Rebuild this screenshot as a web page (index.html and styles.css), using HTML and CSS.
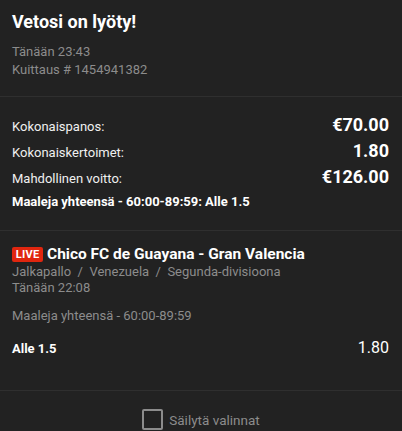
FILE: index.html
```html
<!DOCTYPE html>
<html lang="fi">
<head>
<meta charset="utf-8">
<link rel="stylesheet" href="styles.css">
</head>
<body>
<div class="receipt">
  <section class="header">
    <h1 class="title">Vetosi on lyöty!</h1>
    <div class="meta">
      <div>Tänään 23:43</div>
      <div>Kuittaus # 1454941382</div>
    </div>
  </section>
  <section class="totals">
    <div class="row"><span class="label">Kokonaispanos:</span><span class="value">€70.00</span></div>
    <div class="row"><span class="label">Kokonaiskertoimet:</span><span class="value">1.80</span></div>
    <div class="row"><span class="label">Mahdollinen voitto:</span><span class="value">€126.00</span></div>
    <div class="market-summary">Maaleja yhteensä - 60:00-89:59: Alle 1.5</div>
  </section>
  <section class="event">
    <div class="event-title"><span class="live">LIVE</span><span>Chico FC de Guayana - Gran Valencia</span></div>
    <div class="event-meta">
      <div>Jalkapallo&nbsp; / &nbsp;Venezuela&nbsp; / &nbsp;Segunda-divisioona</div>
      <div>Tänään 22:08</div>
    </div>
    <div class="event-market">Maaleja yhteensä - 60:00-89:59</div>
    <div class="selection"><span class="sel-name">Alle 1.5</span><span class="sel-odds">1.80</span></div>
  </section>
  <footer class="footer">
    <label class="keep"><span class="checkbox"></span><span>Säilytä valinnat</span></label>
  </footer>
</div>
</body>
</html>
```
FILE: styles.css
```css
* { box-sizing: border-box; }
html, body { margin: 0; padding: 0; }
body {
  background: #222222;
  font-family: Roboto, "Liberation Sans", sans-serif;
  color: #ffffff;
  width: 402px;
  height: 431px;
  overflow: hidden;
}
.receipt { width: 402px; }
.header {
  padding: 10px 12px 17px;
  border-bottom: 1px solid #2f2f2f;
}
.title {
  margin: 0;
  font-size: 18px;
  line-height: 24px;
  font-weight: 700;
  color: #ffffff;
}
.meta {
  margin-top: 9px;
  font-size: 13px;
  line-height: 18px;
  color: #8c8c8c;
}
.totals {
  padding: 15px 13px 18px 12px;
  border-bottom: 1px solid #2f2f2f;
}
.row {
  display: flex;
  justify-content: space-between;
  align-items: baseline;
  height: 26px;
  line-height: 26px;
}
.label { font-size: 13px; color: #f0f0f0; }
.value { font-size: 18px; font-weight: 700; color: #ffffff; }
.market-summary {
  margin-top: 2px;
  font-size: 13px;
  line-height: 20px;
  font-weight: 700;
  color: #ffffff;
}
.event {
  padding: 13px 13px 31px 12px;
  border-bottom: 1px solid #2f2f2f;
}
.event-title {
  display: flex;
  align-items: center;
  gap: 4px;
  font-size: 15.5px;
  line-height: 20px;
  font-weight: 700;
}
.live {
  display: inline-flex;
  align-items: center;
  justify-content: center;
  width: 31px;
  height: 15px;
  border-radius: 2px;
  background: #e0260f;
  font-size: 11px;
  font-weight: 700;
  letter-spacing: 0.3px;
  line-height: 15px;
}
.event-meta {
  font-size: 13px;
  line-height: 16px;
  color: #8c8c8c;
}
.event-market {
  margin-top: 12px;
  font-size: 13px;
  line-height: 16px;
  color: #8c8c8c;
}
.selection {
  margin-top: 14px;
  display: flex;
  justify-content: space-between;
  align-items: baseline;
  line-height: 20px;
}
.sel-name { font-size: 13px; font-weight: 700; }
.sel-odds { font-size: 16px; }
.footer {
  display: flex;
  justify-content: center;
  padding-top: 18px;
}
.keep {
  display: flex;
  align-items: center;
  gap: 6px;
  font-size: 13.5px;
  color: #8c8c8c;
}
.checkbox {
  width: 21px;
  height: 21px;
  border: 2px solid #8c8c8c;
  border-radius: 2px;
}
```
